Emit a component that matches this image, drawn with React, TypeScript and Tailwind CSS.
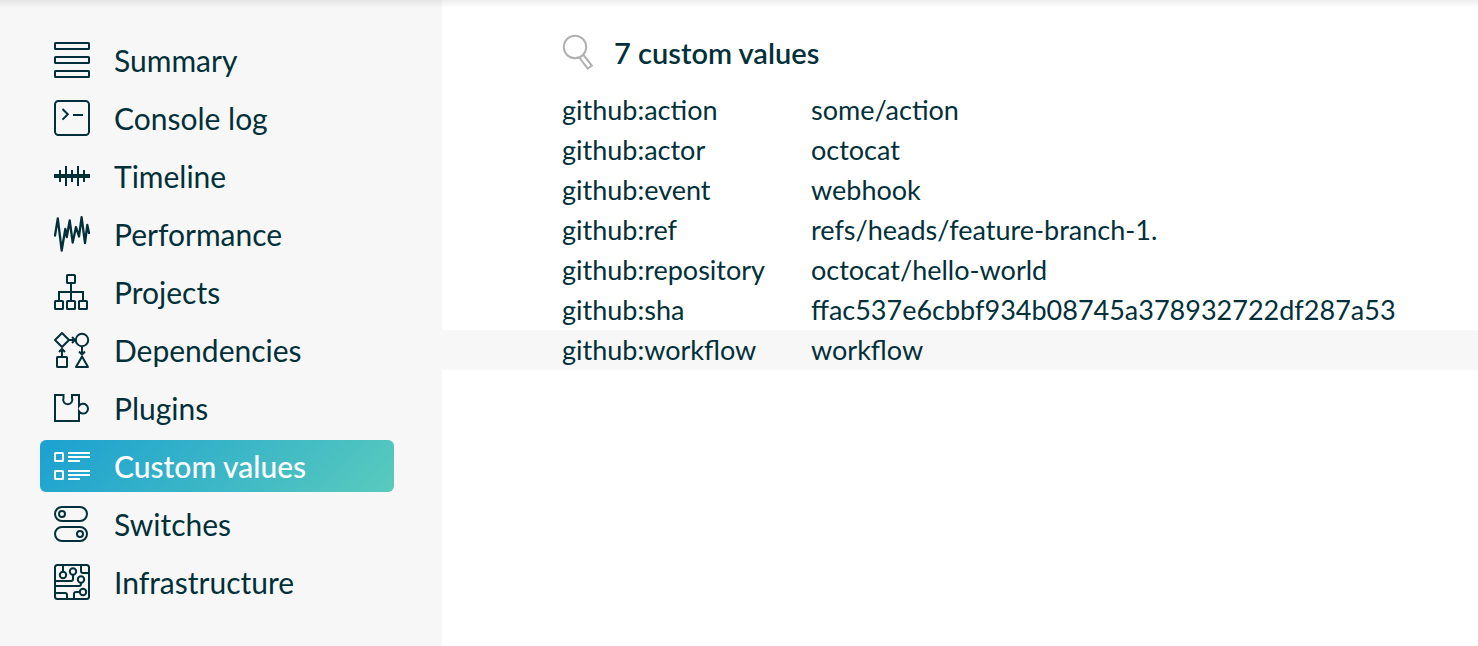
import React from "react";

type NavItem = { label: string; icon: React.ReactNode; active?: boolean };

const navItems: NavItem[] = [
  {
    label: "Summary",
    icon: (
      <>
        <rect x="1" y="1" width="34" height="6" rx="0.6" />
        <rect x="1" y="15" width="34" height="6" rx="0.6" />
        <rect x="1" y="29" width="34" height="6" rx="0.6" />
      </>
    ),
  },
  {
    label: "Console log",
    icon: (
      <>
        <rect x="1" y="1" width="34" height="34" rx="3.5" />
        <path d="M8.5 9l5.3 5.3L8.5 19.6M19 15h10" />
      </>
    ),
  },
  {
    label: "Timeline",
    icon: (
      <>
        <path d="M0 18h36" strokeWidth="4" />
        <path d="M6 12v12M12 8v20M18 12v12M24 8v20M30 12v12" />
      </>
    ),
  },
  {
    label: "Performance",
    icon: (
      <path
        strokeLinejoin="round"
        strokeLinecap="round"
        strokeWidth="2.3"
        d="M1 19.5L3.8 2.5L7.7 34.5L11.3 13L12.8 21L15.7 4.5L18.7 26.5L22 11L25 20.5L27.6 1.2L31 27L33.3 9L35 17"
      />
    ),
  },
  {
    label: "Projects",
    icon: (
      <>
        <rect x="13" y="1" width="8" height="8" rx="0.6" />
        <rect x="1" y="27" width="8" height="8" rx="0.6" />
        <rect x="13" y="27" width="8" height="8" rx="0.6" />
        <rect x="25" y="27" width="8" height="8" rx="0.6" />
        <path d="M17 9v18M5 27v-9h24v9" />
      </>
    ),
  },
  {
    label: "Dependencies",
    icon: (
      <>
        <path strokeLinejoin="round" d="M8 1L15 8L8 15L1 8Z" />
        <circle cx="28" cy="8" r="6.2" />
        <path d="M15 8h6M18 5l3 3l-3 3M8 24v-7M5 20l3-3l3 3M28 14v8M25 19.5l3 3l3-3" />
        <rect x="3" y="25" width="10" height="10" rx="0.6" />
        <path strokeLinejoin="round" d="M28 24.5L34 35H22Z" />
      </>
    ),
  },
  {
    label: "Plugins",
    icon: (
      <path d="M1 5H9.5V8A4.6 4.6 0 1 0 18 8V5H25V16A4.9 4.9 0 1 1 25 21.4V31H1Z" />
    ),
  },
  {
    label: "Custom values",
    active: true,
    icon: (
      <>
        <rect x="1" y="5" width="8" height="8" rx="0.6" />
        <rect x="1" y="23" width="8" height="8" rx="0.6" />
        <path d="M14 5h22M14 9h22M14 13h12M14 23h22M14 27h22M14 31h12" />
      </>
    ),
  },
  {
    label: "Switches",
    icon: (
      <>
        <rect x="1" y="1" width="32" height="14" rx="7" />
        <rect x="1" y="21" width="32" height="14" rx="7" />
        <circle cx="8" cy="8" r="3" />
        <circle cx="26" cy="28" r="3" />
      </>
    ),
  },
  {
    label: "Infrastructure",
    icon: (
      <>
        <rect x="1" y="1" width="34" height="34" rx="2.5" />
        <circle cx="9" cy="11" r="3.2" />
        <circle cx="19" cy="7.5" r="3.2" />
        <circle cx="27" cy="15.5" r="3.2" />
        <circle cx="29" cy="28" r="3.2" />
        <path d="M9 1v7M19 10.5V15q0 2-2 2H1M27 1v6q0 2 2 2h6M27 19v1q0 2-2 2H1M1 29h10q2 0 2 2v4M26 28h-4q-2 0-2 2v5" />
      </>
    ),
  },
];

const customValues: [string, string][] = [
  ["github:action", "some/action"],
  ["github:actor", "octocat"],
  ["github:event", "webhook"],
  ["github:ref", "refs/heads/feature-branch-1."],
  ["github:repository", "octocat/hello-world"],
  ["github:sha", "ffac537e6cbbf934b08745a378932722df287a53"],
  ["github:workflow", "workflow"],
];

function NavLink({ label, icon, active }: NavItem) {
  return (
    <a
      href="#"
      aria-current={active ? "page" : undefined}
      className={
        active
          ? "flex h-[52px] items-center gap-6 rounded-md bg-[linear-gradient(135deg,#1ba1d1,#59cabd)] px-3.5 font-medium text-white"
          : "flex h-[52px] items-center gap-6 rounded-md px-3.5"
      }
    >
      <svg
        viewBox="0 0 36 36"
        className="size-9 shrink-0"
        fill="none"
        stroke="currentColor"
        strokeWidth="2"
        aria-hidden="true"
      >
        {icon}
      </svg>
      <span>{label}</span>
    </a>
  );
}

export default function App() {
  return (
    <div className="flex min-h-screen bg-white font-['Lato',sans-serif] text-[#02303a]">
      <nav
        aria-label="Build scan"
        className="flex w-[442px] shrink-0 flex-col gap-1.5 bg-[#f7f7f7] bg-[linear-gradient(to_bottom,rgba(0,0,0,0.07),transparent_8px)] pt-[34px] pr-12 pb-8 pl-10 text-[30px] leading-9"
      >
        {navItems.map((item) => (
          <NavLink key={item.label} {...item} />
        ))}
      </nav>
      <main className="min-w-0 grow bg-[linear-gradient(to_bottom,rgba(0,0,0,0.07),transparent_8px)] pt-8">
        <div className="flex h-[58px] items-start gap-5 pl-[120px]">
          <button type="button" aria-label="Search" className="shrink-0 text-[#b0b0b0]">
            <svg
              viewBox="0 0 32 40"
              className="h-10 w-8"
              fill="none"
              stroke="currentColor"
              strokeWidth="2"
              aria-hidden="true"
            >
              <circle cx="13" cy="15" r="11.2" />
              <path d="M17.3 25.5L25.7 36.7L29.8 33.6L21.4 22.9" />
            </svg>
          </button>
          <h1 className="pt-1 text-[29px] leading-[34px] font-semibold">7 custom values</h1>
        </div>
        <table className="w-full text-left text-[27px] leading-10">
          <tbody>
            {customValues.map(([key, value]) => (
              <tr key={key} className="last:bg-[#f7f7f7]">
                <th scope="row" className="w-[369px] p-0 pl-[120px] font-normal">
                  {key}
                </th>
                <td className="p-0">{value}</td>
              </tr>
            ))}
          </tbody>
        </table>
      </main>
    </div>
  );
}
